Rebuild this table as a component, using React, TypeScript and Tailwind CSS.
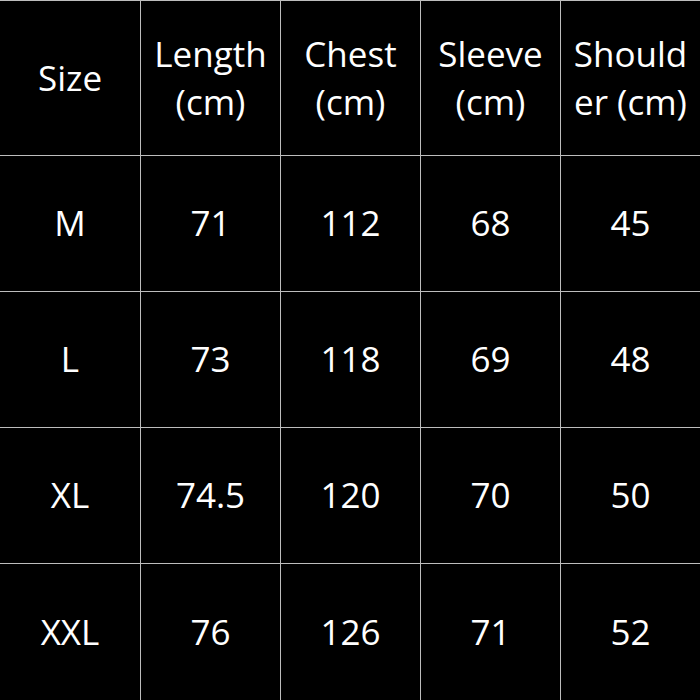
import React from "react";

const headers = ["Size", "Length (cm)", "Chest (cm)", "Sleeve (cm)", "Shoulder (cm)"];
const headerLines: string[][] = [
  ["Size"],
  ["Length", "(cm)"],
  ["Chest", "(cm)"],
  ["Sleeve", "(cm)"],
  ["Should", "er (cm)"],
];
const rows = [
  ["M", "71", "112", "68", "45"],
  ["L", "73", "118", "69", "48"],
  ["XL", "74.5", "120", "70", "50"],
  ["XXL", "76", "126", "71", "52"],
];

export default function App() {
  return (
    <div
      className="w-[700px] h-[700px] bg-black text-white overflow-hidden"
      style={{ fontFamily: '"Open Sans", "Noto Sans", sans-serif' }}
    >
      <div className="grid grid-cols-[140px_140px_140px_140px_140px] grid-rows-[155px_136px_136px_136px_137px]">
        {headerLines.map((lines, i) => (
          <div
            key={"h" + i}
            className={`flex flex-col items-center justify-center border-t border-[#bdbdbd] text-[35px] leading-[48px] ${i > 0 ? "border-l" : ""}`}
            title={headers[i]}
          >
            {lines.map((l, j) => (
              <span key={j} className="whitespace-nowrap">{l}</span>
            ))}
          </div>
        ))}
        {rows.map((r, ri) =>
          r.map((c, ci) => (
            <div
              key={ri + "-" + ci}
              className={`flex items-center justify-center border-t border-[#bdbdbd] text-[35px] ${ci > 0 ? "border-l" : ""}`}
            >
              {c}
            </div>
          ))
        )}
      </div>
    </div>
  );
}
